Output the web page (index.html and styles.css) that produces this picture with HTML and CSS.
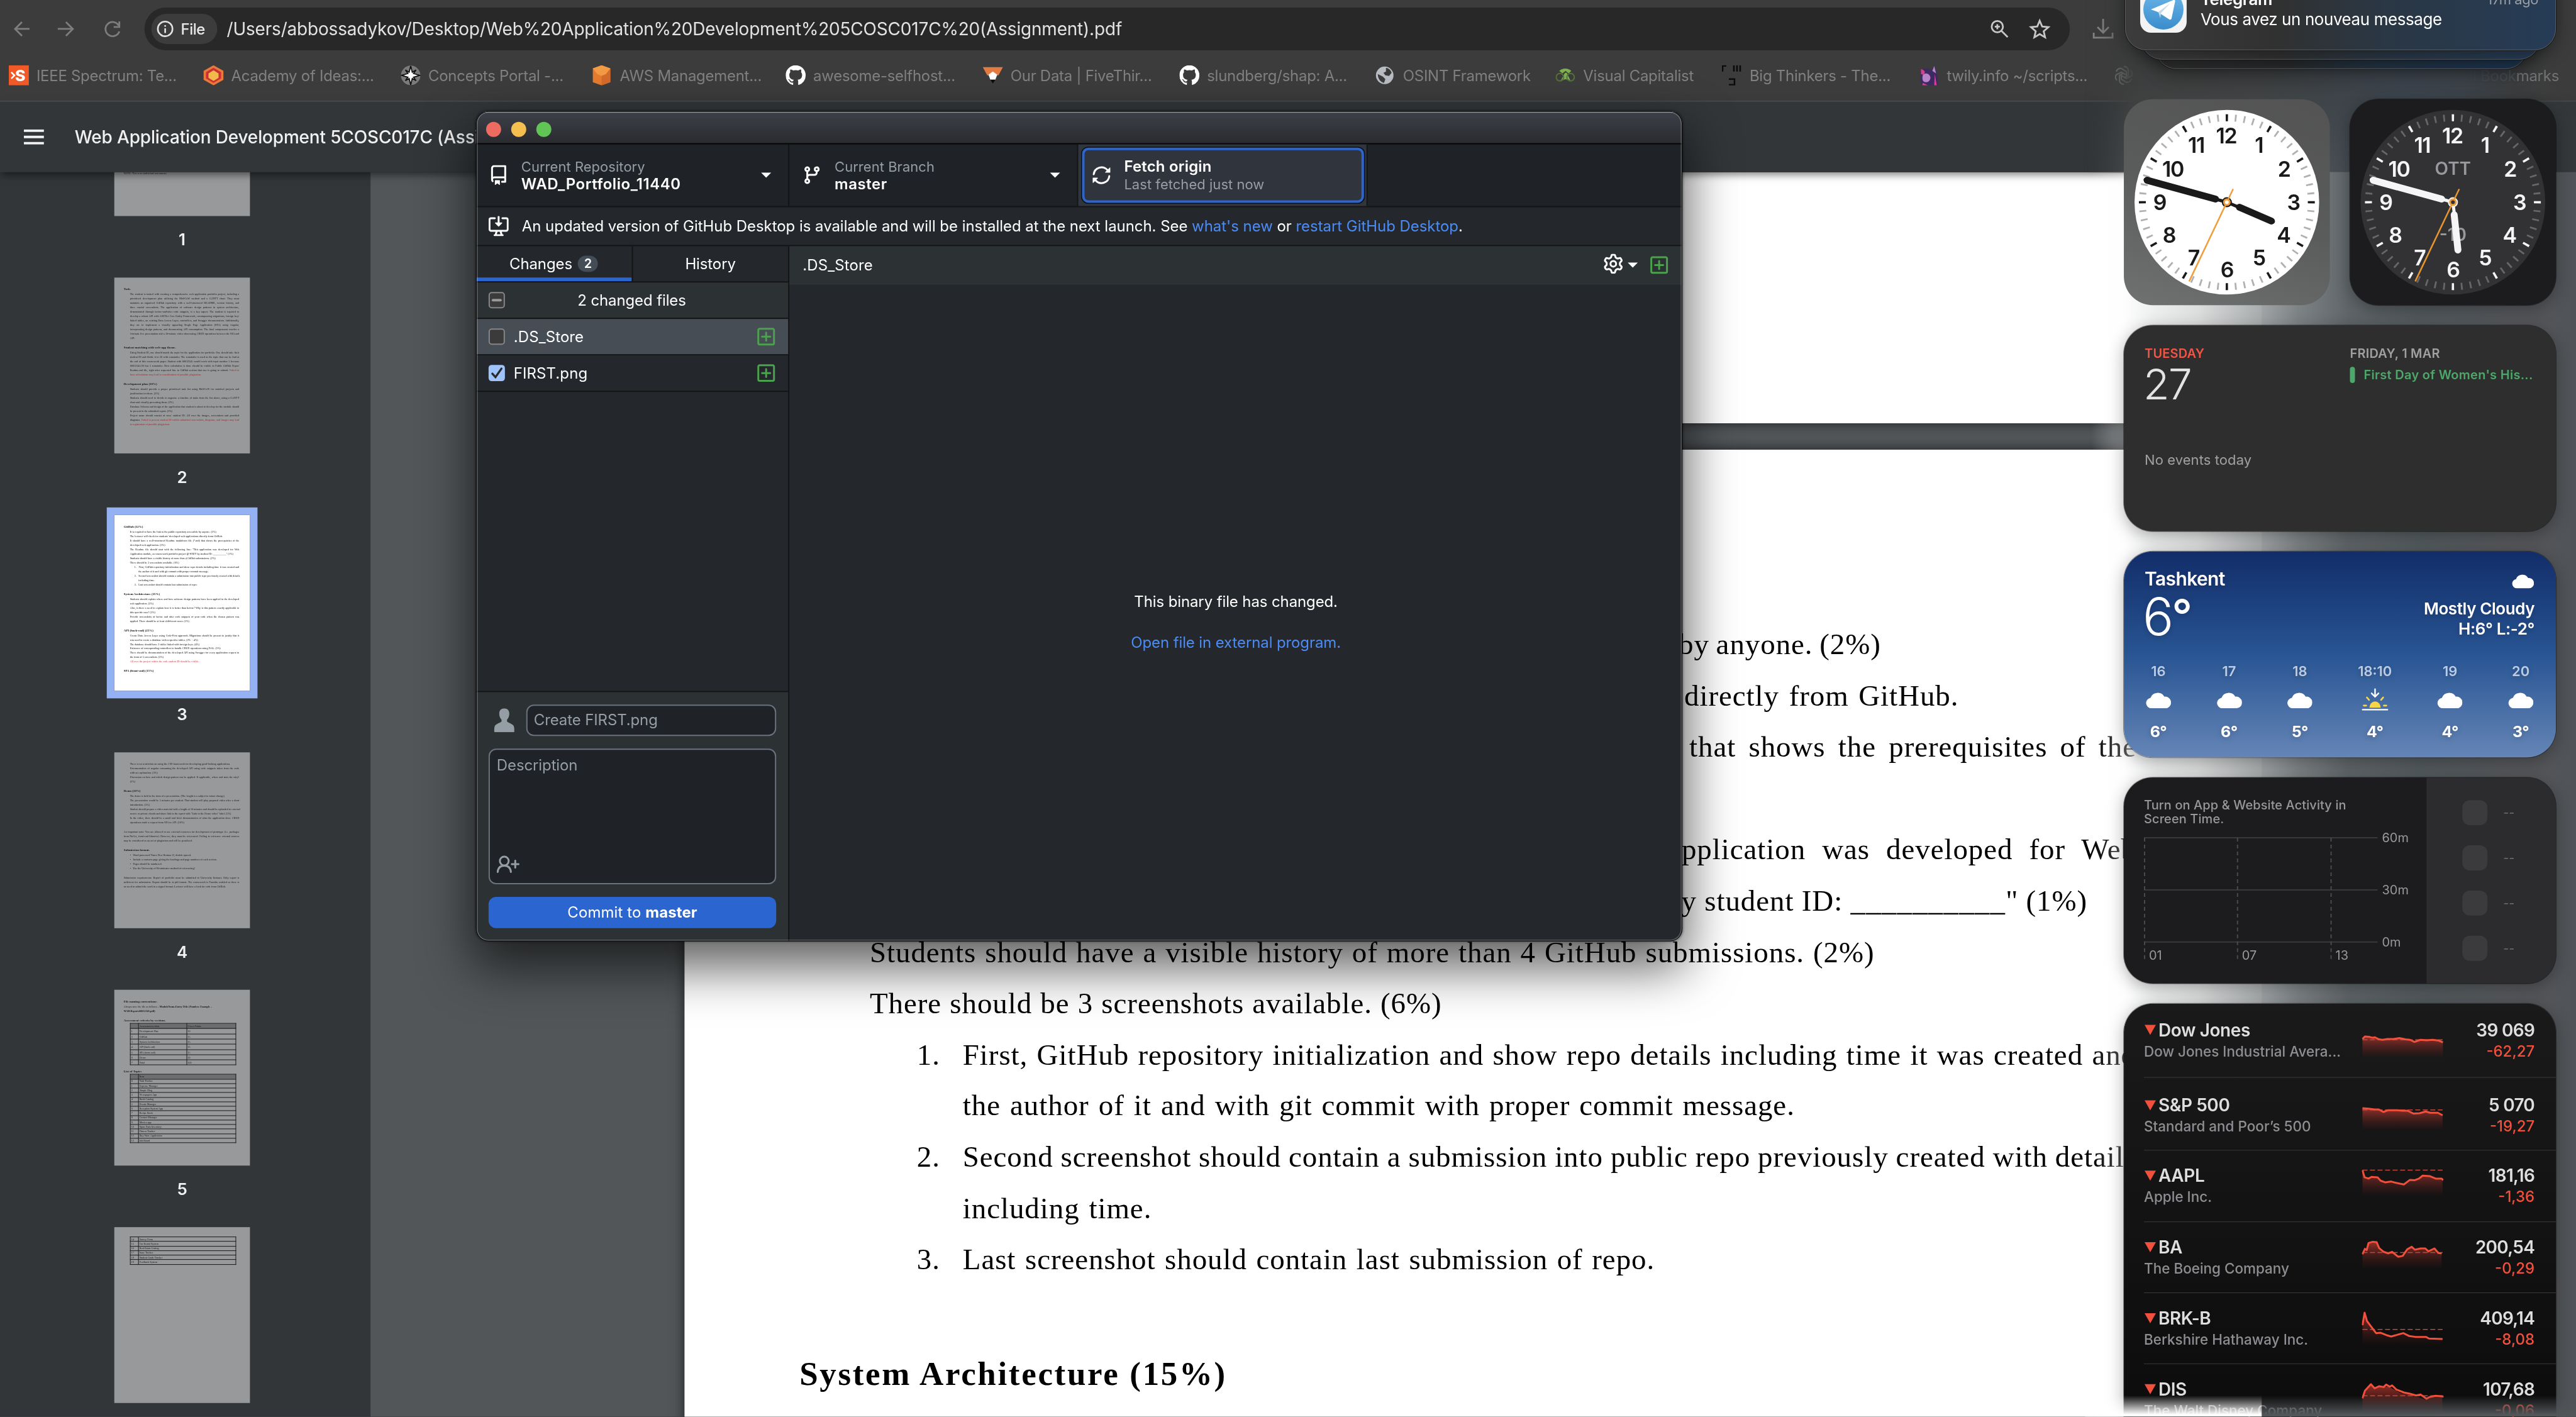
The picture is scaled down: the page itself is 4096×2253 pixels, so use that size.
FILE: index.html
```html
<!DOCTYPE html>
<html lang="en">
<head>
<meta charset="utf-8">
<title>Desktop</title>
<link rel="stylesheet" href="styles.css">
</head>
<body>
<svg width="0" height="0" class="defs">
  <defs>
    <linearGradient id="fall" x1="0" y1="0" x2="0" y2="1"><stop offset="0" stop-color="#c33a30" stop-opacity=".75"/><stop offset="1" stop-color="#5a1c18" stop-opacity=".05"/></linearGradient>
    <linearGradient id="tg" x1="0" y1="0" x2="0" y2="1"><stop offset="0" stop-color="#6cb8ea"/><stop offset="1" stop-color="#3a8ccb"/></linearGradient>
    <symbol id="cloud" viewBox="0 0 40 27"><path d="M9 27a9 8.500 0 0 1-1.500-16.800A12 11.500 0 0 1 29.500 8.300 9.400 9.400 0 1 1 31 27z" fill="#fff"/></symbol>
    <symbol id="mark" viewBox="0 0 16 16"><path fill="#fff" d="M8 0c4.420 0 8 3.580 8 8a8.013 8.013 0 0 1-5.450 7.590c-.4.08-.55-.17-.55-.38 0-.27.01-1.130.01-2.200 0-.75-.25-1.230-.54-1.480 1.780-.2 3.650-.88 3.650-3.950 0-.88-.31-1.590-.82-2.150.08-.2.36-1.020-.08-2.120 0 0-.67-.22-2.200.82-.64-.18-1.320-.27-2-.27-.68 0-1.360.09-2 .27-1.530-1.030-2.200-.82-2.200-.82-.44 1.100-.16 1.920-.08 2.120-.51.56-.82 1.280-.82 2.150 0 3.060 1.860 3.750 3.640 3.950-.23.2-.44.55-.51 1.070-.46.21-1.610.55-2.330-.66-.15-.24-.6-.83-1.230-.82-.67.01-.27.38.01.53.34.19.73.9.82 1.130.16.45.68 1.310 2.690.94 0 .67.01 1.300.01 1.490 0 .21-.15.45-.55.38A7.995 7.995 0 0 1 0 8c0-4.420 3.580-8 8-8Z"/></symbol>
    <symbol id="added" viewBox="0 0 16 16"><path fill="#4ba24c" d="M2.750 1h10.500c.966 0 1.750.784 1.750 1.750v10.500A1.750 1.750 0 0 1 13.250 15H2.750A1.750 1.750 0 0 1 1 13.250V2.750C1 1.784 1.784 1 2.750 1Zm10.500 1.500H2.750a.25.25 0 0 0-.25.25v10.500c0 .138.112.25.25.25h10.500a.25.25 0 0 0 .25-.25V2.750a.25.25 0 0 0-.25-.25ZM8 4a.75.75 0 0 1 .75.75v2.500h2.500a.75.75 0 0 1 0 1.500h-2.500v2.500a.75.75 0 0 1-1.500 0v-2.500h-2.500a.75.75 0 0 1 0-1.500h2.500v-2.500A.75.75 0 0 1 8 4Z"/></symbol>
    <symbol id="ticks" viewBox="-150 -150 300 300">
      <circle class="minor" r="134.500" pathLength="60" transform="rotate(-90)"/>
      <circle class="major" r="134.500" pathLength="60" transform="rotate(-90)"/>
      <g class="num">
        <text x="-1" y="-94">12</text><text x="51" y="-79">1</text><text x="91" y="-41">2</text><text x="106" y="12">3</text><text x="90" y="65">4</text><text x="51" y="101">5</text><text x="0" y="120">6</text><text x="-53" y="101">7</text><text x="-92" y="65">8</text><text x="-107" y="12">9</text><text x="-86" y="-41">10</text><text x="-49" y="-79">11</text>
      </g>
    </symbol>
  </defs>
</svg>
<div class="screen">
  <main class="browser">
    <div class="toolbar">
      <svg class="nav" width="194" height="32" viewBox="0 0 194 32"><g fill="none" stroke="#7d7d7d" stroke-width="2.800"><path d="M47 16H24M35 5 24 16l11 11M92 16h24M105 5l11 11-11 11M189 10.500A11.300 11.300 0 1 0 190 20M190 4v9h-9"/></g></svg>
      <div class="omnibox">
        <span class="chip"><svg width="28" height="28" viewBox="0 0 28 28"><circle cx="14" cy="14" r="11.700" fill="none" stroke="#e3e3e3" stroke-width="2.600"/><path d="M14 13v7.500M14 8v2.600" stroke="#e3e3e3" stroke-width="2.600"/></svg>File</span>
        <span class="url">/Users/abbossadykov/Desktop/Web%20Application%20Development%205COSC017C%20(Assignment).pdf</span>
        <svg class="magnify" width="30" height="30" viewBox="0 0 30 30" fill="none" stroke="#c7c7c7" stroke-width="2.800"><circle cx="11.500" cy="11.500" r="9"/><path d="m18 18 10 10M11.500 7.500v8M7.500 11.500h8"/></svg>
        <svg width="36" height="34" viewBox="0 0 36 34" fill="none" stroke="#c7c7c7" stroke-width="2.800"><path d="m18 4 3.900 9.200 10 .9-7.600 6.600 2.300 9.800-8.600-5.200-8.600 5.200 2.300-9.800L4.100 14.100l10-.9z"/></svg>
      </div>
      <svg class="download" width="34" height="34" viewBox="0 0 34 34" fill="none" stroke="#858585" stroke-width="2.800"><path d="M17 1v22M8 14l9 9 9-9M2 23v8h30v-8"/></svg>
    </div>
    <nav class="bookmarks">
      <a><svg viewBox="0 0 32 32"><path fill="#f05a28" d="M0 0h32v32H0z"/><path d="m4 11 5 5-5 5" fill="none" stroke="#fff" stroke-width="2.500"/><text x="10" y="25" class="fav-s">S</text></svg>IEEE Spectrum: Te...</a>
      <a><svg viewBox="0 0 32 32"><path fill="#e8793a" d="m16 0 16 9v14l-16 9-16-9V9z"/><path fill="#cc2f33" d="m16 4 12 7v10l-12 7-12-7V11z"/><path fill="#f2b84b" d="m16 8 8 5v7l-8 5-8-5v-7z"/></svg>Academy of Ideas:...</a>
      <a><svg viewBox="0 0 32 32"><circle cx="16" cy="16" r="15.500" fill="#7b7b7b"/><path d="m16 1 2.500 10 6-3.500-4 5.500 10 3-10 3 4 5.500-6-3.500L16 31l-2.500-10-6 3.500 4-5.500-10-3 10-3-4-5.500 6 3.500z" fill="#fff" stroke="#111" stroke-width="1.800"/></svg>Concepts Portal -...</a>
      <a><svg viewBox="0 0 32 32"><path fill="#e57b2e" d="m15 0 14 5v22l-14 5-14-5V5z"/><path fill="#f39a45" d="m15 0 14 5-7 9-7 3-7-3-7-9z"/><path fill="#c9602a" d="M15 17l7-3 7-9v22l-14 5z" opacity=".6"/></svg>AWS Management...</a>
      <a><svg><use href="#mark"/></svg>awesome-selfhost...</a>
      <a><svg viewBox="0 0 32 32"><path fill="#e37b43" d="M0 3h32l-7 13H7z"/><path fill="#fff" d="m9 15 7-5 7 5-3 8h-8z"/><path fill="#0c0c0c" d="M12 23h8l-4 6z"/></svg>Our Data | FiveThir...</a>
      <a><svg><use href="#mark"/></svg>slundberg/shap: A...</a>
      <a><svg viewBox="0 0 32 32"><circle cx="15" cy="16" r="14" fill="#b9bcc3"/><path fill="#3c3c3c" d="M17 4c5 1 8 4 9 8l-4 5-6-1-3-4 4-2zM4 14l8 4 4 4-2 6C8 27 4 21 4 14z"/></svg>OSINT Framework</a>
      <a><svg viewBox="0 0 32 32"><path fill="#7fb04f" d="M6 9c5-5 14-5 19 0l-4 4-5-4-5 4z"/><path fill="#7fb04f" d="m8 25 7-13h3l6 13-8-3z"/><circle cx="7" cy="19" r="6" fill="none" stroke="#56733b" stroke-width="2"/><circle cx="24" cy="19" r="6" fill="none" stroke="#56733b" stroke-width="2"/></svg>Visual Capitalist</a>
      <a><svg viewBox="0 0 32 32"><path d="M1 10V1h6M19 0v10M24 0v10M29 0v10M11 22h9v9h-9" fill="none" stroke="#0a0a0a" stroke-width="2.500"/></svg>Big Thinkers - The...</a>
      <a><svg viewBox="0 0 32 32"><path fill="#3d2a63" d="M2 10C6 2 18 6 20 8l4-8c3 8 7 20 6 32H4L2 22z"/><path fill="#b884c9" d="M6 15c5-4 10-2 12 4 0 5-3 8-7 8-5 0-7-4-5-12z"/><path fill="#d6418f" d="M3 6c6 2 8 5 4 9l-4-1zM25 14l3 18h-4zM6 28l8 4H5z"/><path fill="#b884c9" d="m21 9 3-8 3 12z"/></svg>twily.info ~/scripts...</a>
      <a class="dim"><svg viewBox="0 0 32 32" fill="none" stroke="#777" stroke-width="2.200"><path d="M16 2a7 7 0 0 1 7 5v9l-7 4M27 8a7 7 0 0 1 1 9l-8 4-7-4M28 22a7 7 0 0 1-8 5l-8-5v-8M16 30a7 7 0 0 1-7-5v-9l7-4M5 24a7 7 0 0 1-1-9l8-4 7 4M4 10a7 7 0 0 1 8-5l8 5v8"/></svg>Data</a>
      <a class="dimmer"><svg viewBox="0 0 32 32"></svg>»</a>
      <a class="all"><svg viewBox="0 0 32 32" fill="none" stroke="#565b61" stroke-width="2.500"><path d="M2 6h10l4 4h14v16H2z"/></svg><span><i>All Book</i>marks</span></a>
    </nav>
    <div class="pdfbar">
      <svg width="32" height="24" viewBox="0 0 32 24" fill="#f1f1f1"><path d="M0 0h32v4H0zM0 10h32v4H0zM0 20h32v4H0z"/></svg>
      <span>Web Application Development 5COSC017C (Assignment).pdf</span>
    </div>
    <div class="viewer">
      <aside class="thumbs">
        <div class="thumb first"><p class="h">NOTE: This is an individual assessment</p></div><b>1</b>
        <div class="thumb p2">
          <p class="h bold">Task.</p>
          <p>The student is tasked with creating a comprehensive web application portfolio project, including a</p>
          <p>prioritized development plan utilizing the MoSCoW method and a GANTT chart. They must</p>
          <p>maintain an organized GitHub repository with a well-structured README, version history, and</p>
          <p>three crucial screenshots. The application of software design patterns in system architecture,</p>
          <p>demonstrated through before-and-after code snippets, is a key aspect. The student is required to</p>
          <p>develop a robust API with ASP.Net Core Entity Framework, encompassing migrations, foreign key-</p>
          <p>linked tables, an existing Data Access Layer, controllers, and Swagger documentation. Additionally,</p>
          <p>they are to implement a visually appealing Single Page Application (SPA) using Angular,</p>
          <p>incorporating design patterns, and documenting API consumption. The final components involve a</p>
          <p>5-minute live presentation and a 10-minute video showcasing CRUD operations between the SPA and</p>
          <p class="l">API.</p>
          <p class="h bold gap">Student matching with web-app theme.</p>
          <p>Using Student ID, one should match the topic for the application for portfolio. One should take their</p>
          <p>student ID and divide it to 20 with remainder. The remainder is used as the topic that can be find at</p>
          <p>the end of this coursework paper. Student with 00012345 would work with topic number 5 because</p>
          <p>00012345/20 has 5 remainder. How calculation is done should be visible in Public GitHub Repos'</p>
          <p>Readme.md file, right after requested line in GitHub section that one is going to submit. <em>Failed to</em></p>
          <p class="l"><em>have calculations may lead to consideration of possible plagiarism.</em></p>
          <p class="h bold gap">Development plan (10%)</p>
          <p>Students should provide a proper prioritized task list using MoSCoW for matched projects and</p>
          <p class="l">justification for them. (5%)</p>
          <p>Students should need to decide to organize a timeline of tasks from the list above, using a GANTT</p>
          <p class="l">chart and visually presenting them. (2%)</p>
          <p>Database Schema and design of the application that student is about to develop for the module should</p>
          <p class="l">be present in the submitted report. (3%)</p>
          <p>Project name should consist of ones' student ID. All over the images, screenshots and provided</p>
          <p>diagrams. <em>Failed to present student ID within submitted screenshots, diagrams, and images may lead</em></p>
          <p class="l"><em>to registration of possible plagiarism.</em></p>
        </div><b>2</b>
        <div class="thumb current">
          <p class="h bold">GitHub (12%)</p>
          <p class="l">It is required to have the link to the public repository accessible by anyone. (2%)</p>
          <p class="l">The lecturer will check for students' developed web applications directly from GitHub.</p>
          <p>It should have a well-structured Readme markdown file (*.md) that shows the prerequisites of the</p>
          <p class="l">developed web application. (3%)</p>
          <p>The Readme file should start with the following line: "This application was developed for Web</p>
          <p class="l">Application module, as coursework portfolio project @ WIUT by student ID: __________" (1%)</p>
          <p class="l">Students should have a visible history of more than 4 GitHub submissions. (2%)</p>
          <p class="l">There should be 3 screenshots available. (6%)</p>
          <p class="n">1.&nbsp;&nbsp; First, GitHub repository initialization and show repo details including time it was created and</p>
          <p class="n l">&nbsp;&nbsp;&nbsp;&nbsp;&nbsp; the author of it and with git commit with proper commit message.</p>
          <p class="n">2.&nbsp;&nbsp; Second screenshot should contain a submission into public repo previously created with details</p>
          <p class="n l">&nbsp;&nbsp;&nbsp;&nbsp;&nbsp; including time.</p>
          <p class="n l">3.&nbsp;&nbsp; Last screenshot should contain last submission of repo.</p>
          <p class="h bold gap">System Architecture (15%)</p>
          <p>Students should explain where and how software design patterns have been applied in the developed</p>
          <p class="l">web application. (5%)</p>
          <p>Also, is there a need to explain how it is better than before? Why is this pattern exactly applicable to</p>
          <p class="l">this specific case? (5%)</p>
          <p>Provide screenshots of before and after code snippets of your code when the chosen pattern was</p>
          <p class="l">applied. There should be at least 4 different cases. (5%)</p>
          <p class="h bold gap">API (back-end) (25%)</p>
          <p>Create Data Access Layer using Code-First approach. Migrations should be present to justify that it</p>
          <p class="l">was used to create a database with respective tables. (2% + 4%)</p>
          <p class="l">The database should have 2 tables linked with foreign keys. (4%)</p>
          <p class="l">Existence of corresponding controllers to handle CRUD operations using DAL. (5%)</p>
          <p>There should be documentation of the developed API using Swagger for every application request in</p>
          <p class="l">the form of 5 screenshots. (5%)</p>
          <p class="l"><em>All over the project within the code student ID should be visible.</em></p>
          <p class="h bold gap">SPA (front-end) (15%)</p>
        </div><b>3</b>
        <div class="thumb p4">
          <p class="l">There is no restriction on using the CSS framework for developing good-looking applications.</p>
          <p>Documentation of angular consuming the developed API using code snippets taken from the code</p>
          <p class="l">with an explanation. (5%)</p>
          <p>Discussion on how and which design pattern can be applied. If applicable, where and state the why?</p>
          <p class="l">(5%)</p>
          <p class="h bold gap">Demo (20%)</p>
          <p class="l">The demo is held in the form of a presentation. (The length is a subject to minor change)</p>
          <p>The presentation would be 5 minutes per student. That student will play prepared video after a short</p>
          <p class="l">introduction. (5%)</p>
          <p>Student should prepare a video material with a length of 10 minutes and should be uploaded to external</p>
          <p class="l">source or private clouds and share link in the report with "Link to the Demo video" label. (5%)</p>
          <p>In the video, there should be a small and brief demonstration of what the application does. CRUD</p>
          <p class="l">operations made a request from SPA to API. (10%)</p>
          <p class="h f gap">An important note: You are allowed to use external resources for development of prototype (i.e. packages</p>
          <p class="h f">from NuGet, front-end libraries). However, they must be referenced. Failing to reference external sources</p>
          <p class="h">may be considered as an act of plagiarism and will be penalized.</p>
          <p class="h bold gap">Submission format.</p>
          <p class="l">•&nbsp;&nbsp; Word processed Times New Roman 12, double spaced.</p>
          <p class="l">•&nbsp;&nbsp; Include a contents page giving the headings and page numbers of each section.</p>
          <p class="l">•&nbsp;&nbsp; Pages should be numbered.</p>
          <p class="l">•&nbsp;&nbsp; Use the University of Westminster method of referencing!</p>
          <p class="h f gap">Submission requirements: Report of portfolio must be submitted to University Intranet. Only report is</p>
          <p class="h f">sufficient for submission. Report should be in pdf format. The coursework is Turnitin enabled so there is</p>
          <p class="h">no need to submit the work in a zipped format. Lecturer will have a look for code from GitHub.</p>
        </div><b>4</b>
        <div class="thumb p5">
          <p class="h bold">File naming conventions:</p>
          <p class="h">Always save the file as follows – <strong>ModuleName.Entry Title (Number. Example –</strong></p>
          <p class="h pad"><strong>WAD.Report.00012345.pdf)</strong></p>
          <p class="h bold gap">Assessment criteria by sections.</p>
          <table class="t1"><tr class="hd"><td></td><td>Assessment section</td><td>Given Points</td></tr><tr><td>1</td><td>Development Plan</td><td>10</td></tr><tr><td>2</td><td>GitHub</td><td>15</td></tr><tr><td>3</td><td>System Architecture</td><td>15</td></tr><tr><td>4</td><td>API (back end)</td><td>25</td></tr><tr><td>5</td><td>SPA (front end)</td><td>15</td></tr><tr><td>6</td><td>Demo</td><td>20</td></tr><tr><td>7</td><td>Total</td><td>100</td></tr></table>
          <p class="h bold topic">List of Topics</p>
          <table class="t2"><tr class="hd"><td></td><td>Item</td></tr><tr><td>0</td><td>Task Tracker</td></tr><tr><td>1</td><td>Expense Manager</td></tr><tr><td>2</td><td>Simple Blog</td></tr><tr><td>3</td><td>Newspapers App</td></tr><tr><td>4</td><td>Book Catalog</td></tr><tr><td>5</td><td>Events Manager</td></tr><tr><td>6</td><td>Reception System App</td></tr><tr><td>7</td><td>Recipe Book</td></tr><tr><td>8</td><td>Contact Manager</td></tr><tr><td>9</td><td>Movies app</td></tr><tr><td>10</td><td>Spare Parts Inventory</td></tr><tr><td>11</td><td>Fitness Tracker</td></tr><tr><td>12</td><td>Buy Store Application</td></tr><tr><td>13</td><td>Job Board</td></tr></table>
        </div><b>5</b>
        <div class="thumb p6">
          <table class="t2"><tr><td>14</td><td>Survey Form</td></tr><tr><td>15</td><td>Car Rental System</td></tr><tr><td>16</td><td>Real Estate Listing</td></tr><tr><td>17</td><td>Issue Tracker</td></tr><tr><td>18</td><td>Student Grade Tracker</td></tr><tr><td>19</td><td>Feedback System</td></tr></table>
        </div>
      </aside>
      <section class="doc">
        <div class="sheet prev"></div>
        <article class="sheet">
          <h2>GitHub (12%)</h2>
          <div class="ln" style="width:1604px"><span>It is required to have the link to the public repository accessible</span><span class="tail" style="width:316px">by anyone. (2%)</span></div>
          <div class="ln" style="width:1734px"><span>The lecturer will check for students' developed web applications</span><span class="tail" style="width:437px">directly from GitHub.</span></div>
          <div class="ln" style="width:2017px"><span>It should have a well-structured Readme markdown file (*.md)</span><span class="tail" style="width:712px">that shows the prerequisites of the</span></div>
          <div class="ln">developed web application. (3%)</div>
          <div class="ln" style="width:2017px"><span>The Readme file should start with the following line: "This</span><span class="tail" style="width:746px">application was developed for Web</span></div>
          <div class="ln" style="width:1939px"><span>Application module, as coursework portfolio project @ WIUT</span><span class="tail" style="width:671px">by student ID: <u>__________</u>" (1%)</span></div>
          <div class="ln j" style="width:1600px">Students should have a visible history of more than 4 GitHub submissions. (2%)</div>
          <div class="ln j" style="width:911px">There should be 3 screenshots available. (6%)</div>
          <ol>
            <li><div class="ln j" style="width:1869px">First, GitHub repository initialization and show repo details including time it was created and</div><div class="ln j" style="width:1325px">the author of it and with git commit with proper commit message.</div></li>
            <li><div class="ln j" style="width:1869px">Second screenshot should contain a submission into public repo previously created with details</div><div class="ln j" style="width:301px">including time.</div></li>
            <li><div class="ln j" style="width:1102px">Last screenshot should contain last submission of repo.</div></li>
          </ol>
          <h2 class="sys">System Architecture (15%)</h2>
        </article>
      </section>
    </div>
  </main>

  <section class="window">
    <header class="titlebar"><i></i><i></i><i></i></header>
    <div class="actions">
      <div class="act repo">
        <svg width="32" height="32" viewBox="0 0 16 16" fill="#fff"><path d="M2 2.500A2.500 2.500 0 0 1 4.500 0h8.750a.75.75 0 0 1 .75.75v12.500a.75.75 0 0 1-.75.75h-2.500a.75.75 0 0 1 0-1.500h1.750v-2h-8a1 1 0 0 0-.714 1.700.75.75 0 1 1-1.072 1.050A2.495 2.495 0 0 1 2 11.500Zm10.500-1h-8a1 1 0 0 0-1 1v6.708A2.486 2.486 0 0 1 4.500 9h8ZM5 12.250a.25.25 0 0 1 .25-.25h3.500a.25.25 0 0 1 .25.25v3.250a.25.25 0 0 1-.4.2l-1.450-1.087a.249.249 0 0 0-.3 0L5.400 15.700a.25.25 0 0 1-.4-.2Z"/></svg>
        <div><small>Current Repository</small><strong>WAD_Portfolio_11440</strong></div><s></s>
      </div>
      <div class="act branch">
        <svg width="32" height="32" viewBox="0 0 16 16" fill="#fff"><path d="M9.500 3.250a2.250 2.250 0 1 1 3 2.122V6A2.500 2.500 0 0 1 10 8.500H6a1 1 0 0 0-1 1v1.128a2.251 2.251 0 1 1-1.500 0V5.372a2.250 2.250 0 1 1 1.500 0v1.836A2.493 2.493 0 0 1 6 7h4a1 1 0 0 0 1-1v-.628A2.250 2.250 0 0 1 9.500 3.250Zm-6 0a.75.75 0 1 0 1.500 0 .75.75 0 0 0-1.500 0Zm8.250-.75a.75.75 0 1 0 0 1.500.75.75 0 0 0 0-1.500ZM4.250 12a.75.75 0 1 0 0 1.500.75.75 0 0 0 0-1.500Z"/></svg>
        <div><small>Current Branch</small><strong>master</strong></div><s></s>
      </div>
      <div class="act fetch"><div class="ring">
        <svg width="32" height="32" viewBox="0 0 16 16" fill="#fff"><path transform="matrix(-1 0 0 1 16 0)" d="M1.705 8.005a.75.75 0 0 1 .834.656 5.500 5.500 0 0 0 9.592 2.970l-1.204-1.204a.25.25 0 0 1 .177-.427h3.646a.25.25 0 0 1 .25.25v3.646a.25.25 0 0 1-.427.177l-1.380-1.380A7.002 7.002 0 0 1 1.050 8.840a.75.75 0 0 1 .656-.834ZM8 2.500a5.487 5.487 0 0 0-4.131 1.869l1.204 1.204A.25.25 0 0 1 4.896 6H1.250A.25.25 0 0 1 1 5.750V2.104a.25.25 0 0 1 .427-.177l1.380 1.380A7.002 7.002 0 0 1 14.950 7.160a.75.75 0 0 1-1.490.178A5.500 5.500 0 0 0 8 2.500Z"/></svg>
        <div><strong>Fetch origin</strong><small>Last fetched just now</small></div></div>
      </div>
    </div>
    <div class="banner">
      <svg width="32" height="32" viewBox="0 0 32 32" fill="none" stroke="#fff" stroke-width="3" stroke-linecap="round" stroke-linejoin="round"><path d="M10 3.500H4a2.500 2.500 0 0 0-2.500 2.500v15A2.500 2.500 0 0 0 4 23.500h24a2.500 2.500 0 0 0 2.500-2.500V6A2.500 2.500 0 0 0 28 3.500h-6M13 24l-2 6.500M19 24l2 6.500M9.500 30.500h13M16 1v12"/><path d="m11 11 5 5 5-5z" fill="#fff" stroke-width="1.500"/></svg>
      <p>An updated version of GitHub Desktop is available and will be installed at the next launch. See <a>what's new</a> or <a>restart GitHub Desktop</a>.</p>
    </div>
    <div class="panes">
      <div class="side">
        <div class="tabs"><div class="on">Changes <b>2</b></div><div>History</div></div>
        <div class="row head"><span class="box mixed"></span><p>2 changed files</p></div>
        <div class="row sel"><span class="box"></span><p>.DS_Store</p><svg width="32" height="32"><use href="#added"/></svg></div>
        <div class="row"><span class="box ok"><svg width="26" height="26" viewBox="0 0 26 26"><path d="m6 14 5 5.500L20.500 6" fill="none" stroke="#2b2b2b" stroke-width="3.400" stroke-linecap="round"/></svg></span><p>FIRST.png</p><svg width="32" height="32"><use href="#added"/></svg></div>
        <div class="commit">
          <div class="summary"><svg width="34" height="38" viewBox="0 0 34 38"><path fill="#959da5" d="M17 0c5.500 0 8 3.600 8 8.500 0 4-1.200 7-3.600 9.500v3c1 1.500 9 3.500 10.600 7 1 2.200 1 5 1 8.500a1.500 1.500 0 0 1-1.500 1.500h-29A1.500 1.500 0 0 1 1 36.500c0-3.500 0-6.300 1-8.500 1.600-3.500 9.600-5.500 10.600-7v-3C10.200 15.500 9 12.500 9 8.500 9 3.600 11.500 0 17 0z"/></svg><div class="field">Create FIRST.png</div></div>
          <div class="desc"><span>Description</span><svg width="36" height="28" viewBox="0 0 36 28" fill="none" stroke="#959da5" stroke-width="3" stroke-linecap="round"><circle cx="12" cy="9" r="7"/><path d="M1.500 26.500C2 20 6 16.500 12 16.500S22 20 22.500 26.500M29.500 8.500v11M24 14h11"/></svg></div>
          <div class="btn"><span>Commit to <strong>master</strong></span></div>
        </div>
      </div>
      <div class="diff">
        <div class="path"><span>.DS_Store</span><svg class="gear" width="32" height="32" viewBox="0 0 16 16" fill="#fff"><path fill-rule="evenodd" d="M8 0a8.200 8.200 0 0 1 .701.031C9.444.095 9.990.645 10.160 1.290l.288 1.107c.018.066.079.158.212.224.231.114.454.243.668.386.123.082.233.09.299.071l1.103-.303c.644-.176 1.392.021 1.820.63.27.385.506.792.704 1.218.315.675.111 1.422-.364 1.891l-.814.806c-.049.048-.098.147-.088.294.016.257.016.515 0 .772-.01.147.038.246.088.294l.814.806c.475.469.679 1.216.364 1.891a7.977 7.977 0 0 1-.704 1.217c-.428.61-1.176.807-1.820.63l-1.102-.302c-.067-.019-.177-.011-.3.071a5.909 5.909 0 0 1-.668.386c-.133.066-.194.158-.211.224l-.29 1.106c-.168.646-.715 1.196-1.458 1.260a8.006 8.006 0 0 1-1.402 0c-.743-.064-1.289-.614-1.458-1.260l-.289-1.106c-.018-.066-.079-.158-.212-.224a5.738 5.738 0 0 1-.668-.386c-.123-.082-.233-.09-.299-.071l-1.103.303c-.644.176-1.392-.021-1.820-.63a8.120 8.120 0 0 1-.704-1.218c-.315-.675-.111-1.422.363-1.891l.815-.806c.05-.048.098-.147.088-.294a6.214 6.214 0 0 1 0-.772c.01-.147-.038-.246-.088-.294l-.815-.806C.635 6.045.431 5.298.746 4.623a7.920 7.920 0 0 1 .704-1.217c.428-.61 1.176-.807 1.820-.63l1.102.302c.067.019.177.011.3-.071.214-.143.437-.272.668-.386.133-.066.194-.158.211-.224l.29-1.106C6.009.645 6.556.095 7.299.03 7.530.01 7.764 0 8 0Zm-.571 1.525c-.036.003-.108.036-.137.146l-.289 1.105c-.147.561-.549.967-.998 1.189-.173.086-.34.183-.5.29-.417.278-.97.423-1.529.27l-1.103-.303c-.109-.03-.175.016-.195.045-.22.312-.412.644-.573.99-.014.031-.021.11.059.19l.815.806c.411.406.562.957.53 1.456a4.709 4.709 0 0 0 0 .582c.032.499-.119 1.050-.53 1.456l-.815.806c-.081.08-.073.159-.059.19.162.346.353.677.573.989.02.03.085.076.195.046l1.102-.303c.56-.153 1.113-.008 1.530.27.161.107.328.204.501.29.447.222.85.629.997 1.189l.289 1.105c.029.109.101.143.137.146a6.600 6.600 0 0 0 1.142 0c.036-.003.108-.036.137-.146l.289-1.105c.147-.561.549-.967.998-1.189.173-.086.34-.183.5-.29.417-.278.97-.423 1.529-.27l1.103.303c.109.029.175-.016.195-.045.22-.313.411-.644.573-.99.014-.031.021-.11-.059-.19l-.815-.806c-.411-.406-.562-.957-.53-1.456a4.709 4.709 0 0 0 0-.582c-.032-.499.119-1.050.53-1.456l.815-.806c.081-.08.073-.159.059-.19a6.464 6.464 0 0 0-.573-.989c-.02-.03-.085-.076-.195-.046l-1.102.303c-.56.153-1.113.008-1.530-.27a4.440 4.440 0 0 0-.501-.29c-.447-.222-.85-.629-.997-1.189l-.289-1.105c-.029-.11-.101-.143-.137-.146a6.600 6.600 0 0 0-1.142 0ZM11 8a3 3 0 1 1-6 0 3 3 0 0 1 6 0ZM9.500 8a1.500 1.500 0 1 0-3.001.001A1.500 1.500 0 0 0 9.500 8Z"/></svg><s></s><svg class="plus" width="32" height="32"><use href="#added"/></svg></div>
        <div class="binary"><p>This binary file has changed.</p><a>Open file in external program.</a></div>
      </div>
    </div>
  </section>

  <div class="veil top"></div>
  <div class="veil"></div>

  <aside class="center">
    <div class="note">
      <div class="layer l3"></div><div class="layer l2"></div>
      <div class="card">
        <svg width="74" height="74" viewBox="0 0 74 74"><rect width="74" height="74" rx="17" fill="#f3f3f3"/><circle cx="37" cy="37" r="32" fill="url(#tg)"/><path fill="#fff" d="M17 37 53 22c2-.7 3 .5 2.600 2.600L50 51c-.6 2.300-2 2.800-3.900 1.700L28 41z"/><path d="m29 41 19-14-15 16-1 8z" fill="#c5daea"/></svg>
        <div class="msg"><div><b>Telegram</b><time>17m ago</time></div><p>Vous avez un nouveau message</p></div>
      </div>
    </div>
    <div class="widgets">
      <div class="pair">
        <div class="w clock light"><svg viewBox="-164 -164 328 328">
          <circle r="147" fill="#fff"/><use href="#ticks" x="-150" y="-150" width="300" height="300"/>
          <g stroke="#1a1a1a" stroke-linecap="round"><path d="M0 0 74 31" stroke-width="5"/><path d="m20 8 51 22" stroke-width="11"/><path d="M0 0-130-36" stroke-width="5"/><path d="m-18-5-109-30" stroke-width="11"/></g><circle r="8" fill="#1a1a1a"/><path d="M10-21-60 126" stroke="#ef9d3a" stroke-width="2.500"/><circle r="4.500" fill="#fff" stroke="#ef9d3a" stroke-width="3"/>
        </svg></div>
        <div class="w clock dark"><svg viewBox="-164 -164 328 328">
          <circle r="147" fill="#323234"/><use href="#ticks" x="-150" y="-150" width="300" height="300"/>
          <g class="city"><text y="-44">OTT</text><text y="62">-10</text></g>
          <g stroke="#f5f5f7" stroke-linecap="round"><path d="m0 0 9 76" stroke-width="5"/><path d="m2 20 6 56" stroke-width="11"/><path d="M0 0-130-36" stroke-width="5"/><path d="m-18-5-109-30" stroke-width="11"/></g><circle r="8" fill="#f5f5f7"/><path d="M10-21-60 126" stroke="#e5962f" stroke-width="2.500"/><circle r="4.500" fill="#333" stroke="#ef9d3a" stroke-width="3"/>
        </svg></div>
      </div>
      <div class="w cal">
        <div class="today"><b>TUESDAY</b><strong>27</strong><p>No events today</p></div>
        <div class="next"><b>FRIDAY, 1 MAR</b><p><i></i>First Day of Women's His...</p></div>
      </div>
      <div class="w weather">
        <div class="now"><div><b>Tashkent</b><strong>6<sup>°</sup></strong></div><div class="cond"><svg width="35" height="24"><use href="#cloud"/></svg><p>Mostly Cloudy</p><p>H:6° L:-2°</p></div></div>
        <div class="hours">
          <div><i>16</i><svg><use href="#cloud"/></svg><b>6°</b></div>
          <div><i>17</i><svg><use href="#cloud"/></svg><b>6°</b></div>
          <div><i>18</i><svg><use href="#cloud"/></svg><b>5°</b></div>
          <div class="set"><i>18:10</i><svg class="sun" viewBox="0 0 42 36"><path d="M21 1v12M15.500 8l5.500 5.500L26.500 8M1 34h40" fill="none" stroke="#fff" stroke-width="2.400" stroke-linecap="round"/><path d="M12 31a9 10 0 1 1 18 0z" fill="#f9d649"/><path d="M3 27.500h4M35 27.500h4M8 14.500l3.500 4M34 14.500l-3.500 4" stroke="#f9d649" stroke-width="2.600" stroke-linecap="round"/></svg><b>4°</b></div>
          <div><i>19</i><svg><use href="#cloud"/></svg><b>4°</b></div>
          <div><i>20</i><svg><use href="#cloud"/></svg><b>3°</b></div>
        </div>
      </div>
      <div class="w time">
        <div class="usage"><p>Turn on App &amp; Website Activity in<br>Screen Time.</p>
          <svg width="449" height="212" viewBox="0 0 449 212"><path d="M0 12h372M0 95h372M0 178h372" stroke="#39393b" stroke-width="2"/><path d="M1 12v198M149 12v198M298 12v198" stroke="#4a4a4c" stroke-width="2" stroke-dasharray="6 5"/><g class="ax"><text x="379" y="19">60m</text><text x="379" y="102">30m</text><text x="379" y="185">0m</text><text x="8" y="206">01</text><text x="156" y="206">07</text><text x="305" y="206">13</text></g></svg>
        </div>
        <ul><li><i></i>--</li><li><i></i>--</li><li><i></i>--</li><li><i></i>--</li></ul>
      </div>
      <div class="w stocks">
        <div class="s"><div><b>Dow Jones</b><p>Dow Jones Industrial Avera...</p></div><svg viewBox="858 640 270 60" height="40" preserveAspectRatio="none"><path class="a" d="M860 657l8-7 15 0 10 4 8-1 14 5 12 1 15-2 20 0 20-2 20 3 15 1 15 5 20-5 20 1 20-1 20 2 14 4v38H860z"/><path class="d" d="M860 659h265"/><path class="c" d="M860 657l8-6 15 1 10 2 8-1 14 5 12 1 15-2 20 0 20-2 20 3 15 1 15 5 20-5 20 1 20-1 20 2 14 4"/></svg><div class="v"><b>39 069</b><em>-62,27</em></div></div>
        <div class="s"><div><b>S&amp;P 500</b><p>Standard and Poor’s 500</p></div><svg viewBox="858 810 270 65" height="43" preserveAspectRatio="none"><path class="a" d="M860 823l20 1 20 2 14 0 15 6 15-4 30 0 20 1 15 0 20 7 20-1 20-4 15 3 25 0 16 6v35H860z"/><path class="d" d="M860 827h265"/><path class="c" d="M860 823l20 1 20 2 14 0 15 6 15-4 30 0 20 1 15 0 20 7 20-1 20-4 15 3 25 0 16 6"/></svg><div class="v"><b>5 070</b><em>-19,27</em></div></div>
        <div class="s"><div><b>AAPL</b><p>Apple Inc.</p></div><svg viewBox="858 980 270 66" height="44" preserveAspectRatio="none"><path class="a" d="M860 985l7 18 13 2 10-2 20 0 10 8 15 3 20-2 15 3 25 4 20-10 15 1 15-3 15-7 20 0 20 6 20 1 5 3v35H860z"/><path class="d" d="M860 985h265"/><path class="c" d="M860 985l7 17 13 3 10-4 20 1 10 8 15 4 20-2 15 3 27 4 20-11 15 1 15-4 12-7 23 1 20 6 20 0 5 4"/></svg><div class="v"><b>181,16</b><em>-1,36</em></div></div>
        <div class="s"><div><b>BA</b><p>The Boeing Company</p></div><svg viewBox="858 1148 270 68" height="45" preserveAspectRatio="none"><path class="a" d="M860 1183l8-13 6 3 6-19 27-1 8 15 15 10 15 4 13-4 20 13 15-2 15-16 15-6 10 7 20-3 15 0 10 7 20-7 13 12 11 1v32H860z"/><path class="d" d="M860 1179h265"/><path class="c" d="M860 1183l8-13 6 3 6-17 14-3 13 1 8 14 15 9 15 4 13-4 20 12 15-2 15-16 15-6 10 7 20-3 15 0 10 7 20-7 13 11 11 1"/></svg><div class="v"><b>200,54</b><em>-0,29</em></div></div>
        <div class="s"><div><b>BRK-B</b><p>Berkshire Hathaway Inc.</p></div><svg viewBox="858 1310 270 80" height="53" preserveAspectRatio="none"><path class="a" d="M860 1345l7-30 8 20 30 29 15-1 20 6 15 3 40-8 20 7 20 2 35 0 10 4 45 1v12H860z"/><path class="d" d="M860 1355h265"/><path class="c" d="M860 1345l7-30 8 20 30 29 15-1 20 6 15 3 40-8 20 7 20 2 35 0 10 4 45 1"/></svg><div class="v"><b>409,14</b><em>-8,08</em></div></div>
        <div class="s"><div><b>DIS</b><p>The Walt Disney Company</p></div><svg viewBox="858 1485 270 83" height="55" preserveAspectRatio="none"><path class="a" d="M860 1525l8-18 20-16 14 9 15-3 30 0 15 6 25 10 25 2 20 4 35 9 20-7 37 0v47H860z"/><path class="d" d="M860 1519h265"/><path class="c" d="M860 1525l8-18 20-16 12 10 15-5 15 2 8-6 12 5 8-3 14 10 25 7 20 3 20 4 15-2 20 10 10-4 20-3 30 2"/></svg><div class="v"><b>107,68</b><em>-0,06</em></div></div>
      </div>
    </div>
  </aside>
  <div class="fade"></div>
</div>
</body>
</html>
```
FILE: styles.css
```css
* { box-sizing: border-box; }
body { margin: 0; background: #323639; overflow: hidden; font-family: Inter, "Liberation Sans", sans-serif; }
p, h2, ol, ul { margin: 0; padding: 0; list-style: none; font-weight: 400; }
svg { display: block; flex: none; }
i, em { font-style: normal; }
.defs { position: absolute; }
.screen { position: relative; width: 4102px; height: 2256px; overflow: hidden; transform: scale(.99854); transform-origin: 0 0; }

/* browser */
.browser { display: flex; flex-direction: column; height: 2256px; background: #3c3c3c; }
.toolbar { display: flex; align-items: center; height: 92px; flex: none; }
.omnibox { margin-left: 36px; width: 3066px; height: 68px; border-radius: 34px; background: #282828; display: flex; align-items: center; padding: 0 30px 0 11px; }
.chip { display: flex; align-items: center; gap: 11px; width: 105px; height: 48px; border-radius: 24px; background: #3c3c3c; padding-left: 8px; color: #e8e8e8; font-size: 24px; font-weight: 500; letter-spacing: -.5px; }
.url { margin-left: 15px; color: #e3e3e3; font-size: 28px; letter-spacing: -.17px; white-space: nowrap; }
.magnify { margin-left: auto; margin-right: 31px; }
.download { margin-left: 36px; }
.bookmarks { height: 68px; flex: none; display: grid; grid-template-columns: 310px 314px 305px 308px 314px 313px 312px 287px 265px 314px 310px 366px 130px 240px; padding: 0 0 12px 14px; align-items: center; color: #808080; font-size: 24px; letter-spacing: -.26px; white-space: nowrap; }
.bookmarks a { display: flex; align-items: center; gap: 12px; }
.bookmarks svg { width: 32px; height: 32px; }
.fav-s { font: 800 25px Inter, sans-serif; fill: #fff; }
.bookmarks .dim { color: #5a5a5a; }
.bookmarks .dimmer { color: #50565c; }
.bookmarks .all { gap: 22px; }
.bookmarks .all i { color: #50565c; }
.pdfbar { height: 114px; flex: none; border-top: 2px solid #484a4a; background: #323639; display: flex; align-items: center; gap: 49px; padding-left: 38px; color: #f1f1f1; font-size: 28px; font-weight: 500; letter-spacing: -.15px; white-space: nowrap; box-shadow: 0 6px 12px -2px rgba(0,0,0,.5); position: relative; }
.viewer { flex: 1; min-height: 0; display: flex; background: #525659; }
.thumbs { width: 590px; flex: none; background: #323639; overflow: hidden; display: flex; flex-direction: column; align-items: center; }
.thumbs > b { height: 98px; flex: none; line-height: 76px; font-size: 26px; font-weight: 600; color: #f1f1f1; margin-right: 10px; }
.thumb { width: 216px; height: 280px; flex: none; background: #98999a; margin-right: 10px; padding: 15px 17px 0 25px; font: 4.050px/7.020px "Liberation Serif", serif; color: #141415; white-space: nowrap; overflow: hidden; }
.thumb.first { margin-top: -210px; padding-top: 208px; }
.thumb.current { background: #fff; outline: 12px solid #94b2f3; color: #000; }
.thumb p { text-align-last: justify; letter-spacing: .08px; }
.thumb p.l, .thumb p.h { text-align-last: left; }
.thumb p.h { margin-left: -10px; }
.thumb p.f { text-align-last: justify; }
.thumb .bold { font-weight: 700; font-size: 4.800px; line-height: 8px; }
.thumb .gap { margin-top: 8px; }
.thumb p.n { margin-left: 7px; }
.thumb em { color: #a3262a; }
.current em { color: #e2262a; }
.thumb.p5 { padding-right: 22px; }
.thumb .pad { margin-left: 47px; }
.thumb .topic { margin-top: 6px; }
.thumb table { border-collapse: collapse; width: 169px; table-layout: fixed; line-height: 5px; font-weight: 500; }
.thumb td { border: 1px solid #1a1a1a; padding: 0 1px; height: 7.260px; }
.thumb .t1 td { height: 8.300px; }
.thumb td:first-child { width: 13px; }
.thumb .t1 td:nth-child(2) { width: 77px; }
.thumb .hd { background: #6d6e6f; }

/* document */
.doc { flex: 1; overflow: hidden; padding-left: 500px; }
.sheet { width: 2511px; height: 1700px; background: #fff; box-shadow: 0 0 18px rgba(0,0,0,.65); padding: 182px 0 0 295px; font-family: "Liberation Serif", serif; font-size: 47px; color: #000; letter-spacing: .95px; word-spacing: -2px; white-space: nowrap; }
.sheet.prev { height: 400px; margin-bottom: 42px; padding: 0; }
.sheet h2 { margin-left: -112px; font-size: 53px; font-weight: 700; line-height: 88px; letter-spacing: 2.700px; word-spacing: 0; }
.sheet .sys { margin-top: 96px; }
.ln { display: flex; justify-content: space-between; line-height: 81.600px; height: 81.600px; }
.ln.j { display: block; text-align-last: justify; }
.tail { text-align-last: justify; }
.tail u { text-decoration: none; letter-spacing: 1.200px; }
.sheet ol { counter-reset: n; margin-left: 75px; }
.sheet li { display: grid; grid-template-columns: 73px auto; counter-increment: n; }
.sheet li::before { content: counter(n) "."; line-height: 81.600px; }
.sheet li .ln { grid-column: 2; }

/* desktop window */
.window { position: absolute; left: 758px; top: 177px; width: 1921px; height: 1322px; border-radius: 20px; background: #24282d; overflow: hidden; display: flex; flex-direction: column; color: #fff; font-size: 24px; letter-spacing: -.1px; }
.window::after { content: ""; position: absolute; inset: 0; border-radius: 20px; border: 1px solid #000; box-shadow: inset 0 0 0 1.500px rgba(255,255,255,.28); }
.window { box-shadow: 0 36px 80px 6px rgba(0,0,0,.62), 0 0 4px rgba(0,0,0,.5); }
.titlebar { height: 53px; flex: none; border-bottom: 2px solid #000; background: linear-gradient(#3e404a, #2a2b2f); display: flex; align-items: center; gap: 16px; padding: 6px 0 0 16px; box-shadow: inset 0 3px 0 -1px #85868c; }
.titlebar i { width: 24px; height: 24px; border-radius: 50%; background: #ed6b60; }
.titlebar i:nth-child(2) { background: #f5bf4f; }
.titlebar i:nth-child(3) { background: #61c555; }
.actions { height: 100px; flex: none; display: flex; background: #1f2327; border-bottom: 2px solid #141414; }
.act { display: flex; align-items: center; width: 499px; padding-left: 20px; border-right: 2px solid #141414; }
.act.branch { width: 460px; }
.act > div, .ring > div { margin-left: 20px; flex: 1; }
.act small, .act strong { display: block; font-size: 22px; line-height: 28px; color: #959da5; white-space: nowrap; letter-spacing: .05px; }
.act strong { font-size: 24px; font-weight: 600; color: #fff; letter-spacing: .55px; }
.fetch strong { letter-spacing: .2px; }
s { width: 0; height: 0; border: 8px solid transparent; border-top-color: #fff; border-bottom: 0; text-decoration: none; }
.act s { margin-right: 27px; }
.act.fetch { width: 461px; background: #2f363d; padding: 0; }
.act.fetch .ring { margin: 0 4px 0 6px; height: 88px; border: 4px solid #2b65d0; border-radius: 10px; background: #30343d; display: flex; align-items: center; padding-left: 11px; box-shadow: 0 0 0 1.500px #0c0e10; }
.banner { height: 62px; flex: none; border-bottom: 2px solid #141414; display: flex; align-items: center; padding-left: 20px; gap: 21px; white-space: nowrap; letter-spacing: -.035px; }
.window a { color: #4b8bf4; }
.panes { flex: 1; display: flex; min-height: 0; }
.side { width: 499px; border-right: 2px solid #141414; display: flex; flex-direction: column; }
.tabs { height: 58px; flex: none; display: flex; border-bottom: 2px solid #141414; }
.tabs div { flex: 1; display: flex; align-items: center; justify-content: center; gap: 9px; }
.tabs .on { border-right: 2px solid #141414; box-shadow: inset 0 -6px 0 #2b65d0; }
.tabs b { width: 32px; height: 26px; border-radius: 13px; background: #444d56; font-size: 20px; font-weight: 600; line-height: 26px; text-align: center; }
.row { height: 58px; flex: none; border-bottom: 2px solid #141414; display: flex; align-items: center; padding: 0 19px 0 20px; gap: 14px; }
.row p { flex: 1; letter-spacing: .1px; }
.row.head { background: #2c3134; }
.row.head p { text-align: center; padding-right: 42px; letter-spacing: -.1px; }
.row.sel { background: #464d55; }
.box { width: 26px; height: 26px; border: 2px solid #868686; border-radius: 5px; background: #3b3b3b; display: flex; align-items: center; justify-content: center; }
.box.mixed::before { content: ""; width: 16px; height: 4px; border-radius: 2px; background: #9a9a9a; }
.box.ok { border: 0; background: #9ec4fb; }
.commit { margin-top: auto; height: 399px; border-top: 2px solid #141414; background: #2c3134; padding: 20px 19px 0 20px; display: flex; flex-direction: column; gap: 20px; color: #959da5; }
.summary { display: flex; align-items: center; gap: 18px; padding-left: 8px; }
.field { flex: 1; height: 50px; border: 2px solid #6a737d; border-radius: 12px; background: #1f2327; line-height: 46px; padding-left: 10px; }
.desc { height: 216px; border: 2px solid #6a737d; border-radius: 12px; background: #1f2327; padding: 10px 11px 16px; display: flex; flex-direction: column; justify-content: space-between; }
.btn { height: 50px; border-radius: 12px; background: #2b65d0; color: #fff; text-align: center; line-height: 50px; letter-spacing: .1px; }
.diff { flex: 1; display: flex; flex-direction: column; }
.path { height: 61px; flex: none; background: #2c3134; border-bottom: 1px solid #33393d; display: flex; align-items: center; padding: 0 21px 0 21px; letter-spacing: .15px; }
.path .gear { margin-left: auto; margin-right: 7px; margin-bottom: 4px; }
.path s { margin-right: 18px; }
.binary { flex: 1; display: flex; flex-direction: column; align-items: center; gap: 37px; padding-top: 490px; }

/* blurred backdrop behind the notification column */
.veil { position: absolute; left: 3330px; top: 274px; width: 772px; height: 1982px; background: linear-gradient(90deg, rgba(250,250,250,0) 0, rgba(250,250,250,.3) 52px, #eceded 105px, #dcdddd 170px, #c0c2c3 225px, #a9acad 271px, #a0a4a6 272px, #7d8285 330px, #5f6568 410px, #525a5d 530px, #56575b 690px, #505357 772px); }
.veil.top { top: 0; left: 3316px; width: 786px; height: 276px; background: linear-gradient(90deg, rgba(60,60,60,0) 0, #3d3e3e 80px, #3d3f40 290px, #3b444d 510px, #3d4247 690px, #3c3c3c 786px); mask-image: linear-gradient(90deg, transparent, #000 90px, #000 610px, rgba(0,0,0,.2) 700px); }
.veil.top::after { content: ""; position: absolute; inset: 130px 0 0 0; background: linear-gradient(90deg, transparent, #4a4c4d 70px, #55585a 280px, #464d54 430px, #3c4247 786px); mask-image: linear-gradient(transparent, #000); }

/* notification centre */
.center { position: absolute; left: 3382px; top: 0; width: 688px; height: 2256px; color: #fff; }
.note { height: 158px; position: relative; }
.card, .layer { position: absolute; left: 2px; top: -60px; width: 686px; height: 140px; border-radius: 34px; border: 1.500px solid #5b5e62; box-shadow: 0 0 0 1px #18191b, 0 4px 30px rgba(0,0,0,.4); background: linear-gradient(90deg, #3c3c3c, #313131 35%, #2a3744 60%, #263c56); }
.layer.l2 { left: 27px; width: 636px; height: 155px; }
.layer.l3 { left: 50px; width: 592px; height: 170px; background: linear-gradient(90deg, #303030, #2a2c2e 35%, #233444 60%, #1d3550); }
.card { display: flex; padding: 37px 27px 0 23px; gap: 22px; }
.msg { flex: 1; padding-top: 5px; font-size: 26px; letter-spacing: -.4px; line-height: 32px; }
.msg div { display: flex; justify-content: space-between; }
.msg b { font-weight: 600; }
.msg time { font-size: 22px; color: #9a9fa5; }
.widgets { display: flex; flex-direction: column; gap: 32px; }
.pair { display: flex; justify-content: space-between; }
.w { height: 328px; border-radius: 46px; overflow: hidden; box-shadow: 0 0 0 1px rgba(0,0,0,.4), 0 6px 26px rgba(0,0,0,.3); }
.clock { width: 328px; background: #1c1c1e; }
.clock.light { background: linear-gradient(200deg, #535353, #5a5b5b 50%, #707171); box-shadow: none; }
.light use { --n: #1a1a1a; --tick: #b0b0b0; }
.dark use { --n: #f5f5f7; --tick: #67676a; }
.num, .city { text-anchor: middle; }
.num { font-size: 34px; font-weight: 600; fill: var(--n); letter-spacing: -1.500px; }
.minor, .major { fill: none; stroke: var(--tick); stroke-width: 11; stroke-dasharray: .2 .8; stroke-dashoffset: .1; }
.major { stroke: var(--n); stroke-dasharray: .26 4.740; stroke-dashoffset: .13; }
.city { font-size: 28px; font-weight: 600; fill: #98989d; }
.cal { background: #2e2e2e; display: flex; padding: 0 33px; }
.cal b { display: block; font-size: 20px; line-height: 24px; font-weight: 600; color: #a0a0a0; margin-top: 33px; white-space: nowrap; letter-spacing: .2px; }
.today { width: 327px; }
.cal .today b { color: #f15545; }
.today strong { display: block; font-size: 68px; font-weight: 300; line-height: 68px; margin-top: 2px; margin-left: -2px; color: #e3e3e3; letter-spacing: -2px; }
.today p { font-size: 22px; color: #a0a0a0; margin-top: 74px; letter-spacing: .1px; }
.next p { display: flex; align-items: center; gap: 14px; margin-top: 9px; height: 26px; font-size: 20px; font-weight: 600; color: #4ea76a; white-space: nowrap; letter-spacing: .3px; }
.next i { width: 8px; height: 26px; border-radius: 4px; background: #4ea76a; }
.weather { background: linear-gradient(#122d69, #285593 50%, #6585b6); display: flex; flex-direction: column; padding: 0 34px 0 33px; text-shadow: 0 2px 8px rgba(0,0,0,.2); }
.now { display: flex; justify-content: space-between; height: 176px; }
.now b { display: block; font-size: 30px; font-weight: 600; line-height: 36px; margin-top: 25px; letter-spacing: -.6px; }
.now strong { display: block; font-size: 82px; line-height: 80px; font-weight: 300; margin-top: 3px; margin-left: -3px; letter-spacing: -3px; }
.now sup { font-weight: 500; vertical-align: baseline; font-size: 72px; line-height: 1; position: relative; top: -5px; }
.cond { display: flex; flex-direction: column; align-items: flex-end; padding-top: 35px; font-size: 26px; line-height: 32px; letter-spacing: -.4px; }
.cond svg { margin-bottom: 16px; margin-right: 1px; }
.cond p { font-weight: 600; }
.hours { display: flex; justify-content: space-between; }
.hours div { width: 44px; display: flex; flex-direction: column; align-items: center; }
.hours div.set { width: 58px; }
.hours i { font-size: 22px; font-weight: 600; line-height: 30px; color: #bccbe4; }
.hours svg { width: 40px; height: 27px; margin: 17px 0 19px; }
.hours svg.sun { width: 42px; height: 36px; margin: 12px 0 15px; }
.hours b { font-size: 25px; font-weight: 700; line-height: 36px; letter-spacing: -.5px; }
.time { display: flex; background: #1c1c1e; }
.usage { width: 482px; padding: 33px 0 0 32px; }
.usage p { font-size: 20px; font-weight: 500; line-height: 22px; color: #98989b; white-space: nowrap; letter-spacing: .1px; }
.usage svg { margin-top: 7px; }
.ax { font-size: 20px; fill: #98989b; }
.time ul { flex: 1; background: #2c2c2e; padding: 36px 0 0 57px; color: #6a6a6d; font-size: 20px; }
.time li { display: flex; align-items: center; height: 40px; gap: 25px; margin-bottom: 32px; }
.time li i { width: 40px; height: 40px; border-radius: 12px; background: #3b3b3e; }
.stocks { height: 720px; background: linear-gradient(#1a1a1a, #0b0b0b); }
.s { display: flex; height: 114px; padding: 23px 34px 0 0; margin-left: 32px; border-bottom: 1.500px solid #3a3a3c; }
.s:nth-child(1) { height: 118px; padding-top: 25px; }
.s:nth-child(2) { height: 116px; padding-top: 27px; }
.s:nth-child(n+4) { height: 113px; }
.s > div:first-child { width: 347px; white-space: nowrap; }
.s b { display: block; font-size: 28px; font-weight: 600; line-height: 34px; color: #dededf; letter-spacing: -.4px; }
.s > div:first-child b { display: flex; align-items: center; gap: 4px; }
.s > div:first-child b::before { content: ""; margin-left: 1px; border: 9px solid transparent; border-top: 16px solid #f0503c; border-bottom: 0; }
.s p { font-size: 22.500px; line-height: 34px; color: #8e8e93; font-weight: 500; letter-spacing: 0; }
.s svg { width: 130px; margin-top: 5px; }
.s:nth-child(1) svg { margin-top: 20px; }
.s:nth-child(2) svg { margin-top: 13px; }
.v { margin-left: auto; text-align: right; }
.s .v b { letter-spacing: -.7px; }
.s em { font-size: 24px; line-height: 33px; font-weight: 500; color: #f0503c; }
.a { fill: url(#fall); }
.c { fill: none; stroke: #f0503c; stroke-width: 3; vector-effect: non-scaling-stroke; stroke-linejoin: round; }
.d { stroke: #c3473b; stroke-width: 1.500; stroke-dasharray: 8 4; vector-effect: non-scaling-stroke; }
.fade { position: absolute; left: 3320px; bottom: 0; width: 782px; height: 34px; background: linear-gradient(90deg, #fff 281px, #515558 282px); mask-image: linear-gradient(transparent, #000 90%); }
```
